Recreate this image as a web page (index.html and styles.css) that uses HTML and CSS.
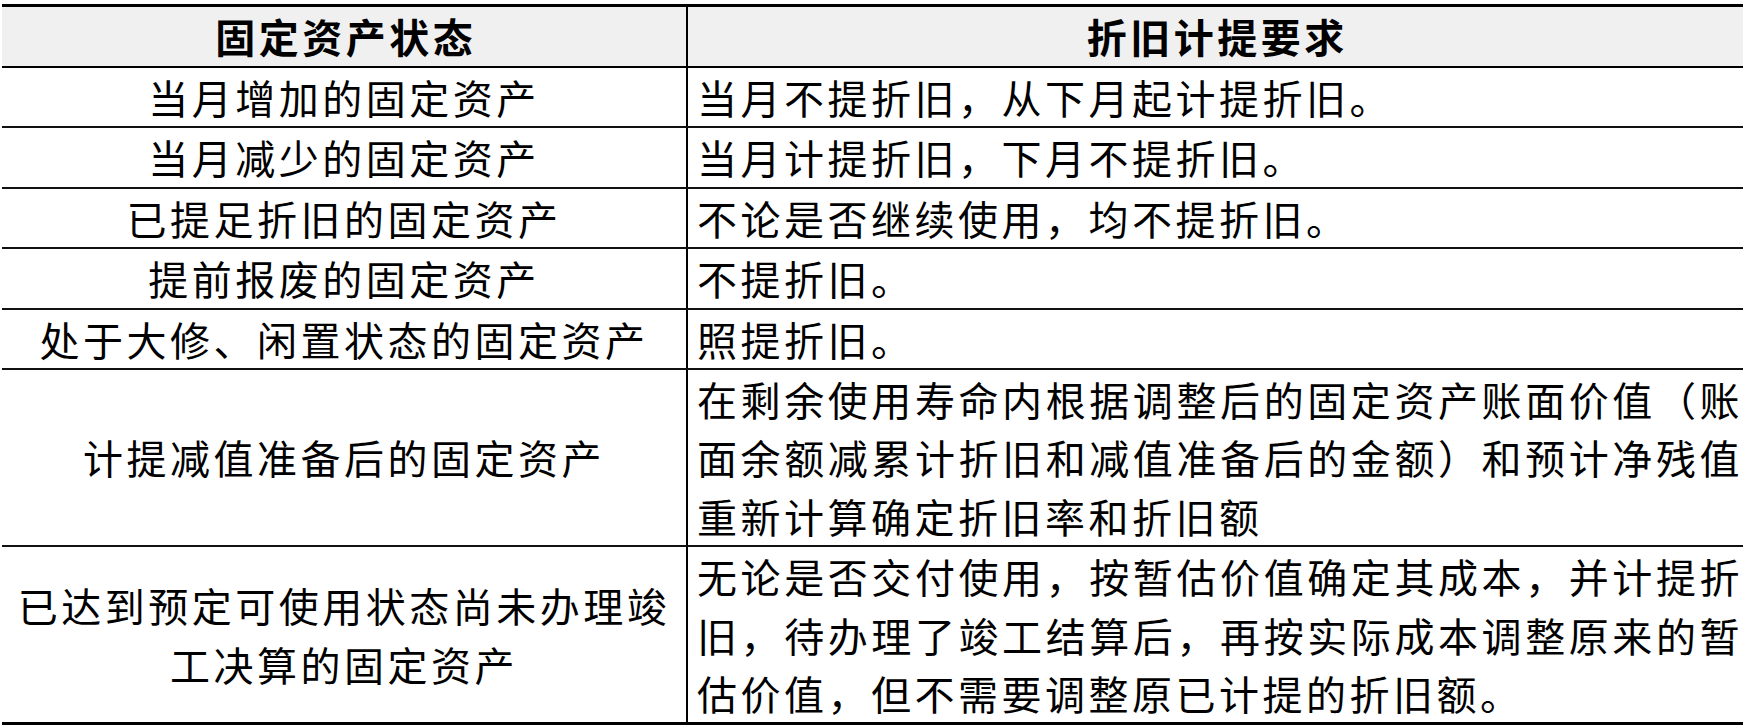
FILE: index.html
```html
<!DOCTYPE html>
<html lang="zh-CN">
<head>
<meta charset="utf-8">
<title>固定资产折旧计提要求</title>
<link rel="stylesheet" href="styles.css">
</head>
<body>
<table class="dep">
  <colgroup><col class="k1"><col class="k2"></colgroup>
  <thead>
    <tr><th class="h1">固定资产状态</th><th class="h2">折旧计提要求</th></tr>
  </thead>
  <tbody>
    <tr><td class="state">当月增加的固定资产</td><td class="rule">当月不提折旧，从下月起计提折旧。</td></tr>
    <tr><td class="state">当月减少的固定资产</td><td class="rule">当月计提折旧，下月不提折旧。</td></tr>
    <tr><td class="state">已提足折旧的固定资产</td><td class="rule">不论是否继续使用，均不提折旧。</td></tr>
    <tr><td class="state">提前报废的固定资产</td><td class="rule">不提折旧。</td></tr>
    <tr><td class="state">处于大修、闲置状态的固定资产</td><td class="rule">照提折旧。</td></tr>
    <tr>
      <td class="state">计提减值准备后的固定资产</td>
      <td class="rule"><span class="jl">在剩余使用寿命内根据调整后的固定资产账面价值（账</span><span class="jl">面余额减累计折旧和减值准备后的金额）和预计净残值</span><span class="ll">重新计算确定折旧率和折旧额</span></td>
    </tr>
    <tr>
      <td class="state">已达到预定可使用状态尚未办理竣<br>工决算的固定资产</td>
      <td class="rule"><span class="jl">无论是否交付使用，按暂估价值确定其成本，并计提折</span><span class="jl">旧，待办理了竣工结算后，再按实际成本调整原来的暂</span><span class="ll">估价值，但不需要调整原已计提的折旧额。</span></td>
    </tr>
  </tbody>
</table>
</body>
</html>
```

FILE: styles.css
```css
html, body {
  margin: 0;
  padding: 0;
  background: #ffffff;
}

body {
  font-family: "Noto Sans CJK SC", "Noto Sans", sans-serif;
  color: #000000;
}

.dep {
  border-collapse: collapse;
  table-layout: fixed;
  width: 1741px;
  margin: 4px 2px 0 2px;
}

.k1 {
  width: 685px;
}

.dep th,
.dep td {
  padding: 0;
  font-size: 40px;
  line-height: 58.4px;
  letter-spacing: 3.5px;
}

.dep thead th {
  background: #f0f0f0;
  border-top: 3px solid #000000;
  border-bottom: 2px solid #000000;
  font-weight: 700;
  line-height: 59px;
  text-align: center;
  padding-left: 3.5px;
}

.dep td {
  border-bottom: 2px solid #111111;
}

.dep tbody tr:last-child td {
  border-bottom: 3px solid #000000;
}

.h2,
.rule {
  border-left: 2px solid #000000;
}

.state {
  text-align: center;
  vertical-align: middle;
  padding-left: 3.5px;
}

.dep td.rule {
  text-align: left;
  vertical-align: top;
  padding: 0 0 0 9px;
}

.jl {
  display: block;
  white-space: nowrap;
  text-align: justify;
  text-align-last: justify;
}

.ll {
  display: block;
  white-space: nowrap;
  text-align: left;
}
```
